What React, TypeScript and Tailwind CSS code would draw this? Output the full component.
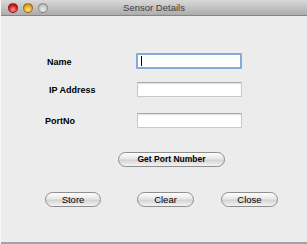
import React from "react";

const Light: React.FC<{ className: string }> = ({ className }) => (
  <span className={`block w-[10px] h-[10px] rounded-full border border-black/30 ${className}`} />
);

const Field: React.FC<{ focused?: boolean }> = ({ focused }) => (
  <div
    className={
      focused
        ? "ml-auto mr-[65px] w-[106px] h-[16px] bg-white border-2 border-[#86a9dc] rounded-[1px] flex items-center pl-[3px]"
        : "ml-auto mr-[65px] w-[105px] h-[15px] bg-white border border-[#c9c9c9] border-t-[#a9a9a9] shadow-[inset_0_1px_1px_rgba(0,0,0,0.12)]"
    }
  >
    {focused && <span className="block w-px h-[10px] bg-black" />}
  </div>
);

const Button: React.FC<{ label: string; bold?: boolean; className?: string }> = ({ label, bold, className }) => (
  <button
    className={`h-[15px] rounded-full border border-[#8e8e8e] bg-[linear-gradient(#ffffff,#e6e6e6_45%,#d4d4d4_55%,#f4f4f4)] text-black leading-none flex items-center justify-center ${
      bold ? "font-bold text-[8.5px]" : "text-[9.5px]"
    } ${className ?? ""}`}
  >
    {label}
  </button>
);

export default function App() {
  return (
    <div className="w-[307px] h-[244px] flex flex-col bg-[#ececec] font-['Liberation_Sans',Arial,sans-serif] overflow-hidden border-l border-[#f8f8f8]">
      <div className="relative h-[16px] shrink-0 flex items-center bg-[linear-gradient(#d9d9d9,#acacac)] border-b border-[#858585]">
        <div className="flex gap-[5px] pl-[7px]">
          <Light className="bg-[radial-gradient(circle_at_50%_70%,#ff9a9a,#d21c1c_60%,#9a0b0b)]" />
          <Light className="bg-[radial-gradient(circle_at_50%_70%,#ffe48a,#e3a11c_60%,#a86a06)]" />
          <Light className="bg-[radial-gradient(circle_at_50%_70%,#eeeeee,#c4c4c4_60%,#a4a4a4)] border-black/15" />
        </div>
        <span className="absolute inset-x-0 text-center text-[9.5px] text-[#3c3c3c] leading-none">Sensor Details</span>
      </div>

      <div className="flex-1 flex flex-col">
        <div className="mt-[37px] h-[16px] flex items-center">
          <span className="ml-[46px] mt-[3px] text-[9px] font-bold text-black">Name</span>
          <Field focused />
        </div>
        <div className="mt-[13px] h-[15px] flex items-center">
          <span className="ml-[48px] mt-[3px] text-[9px] font-bold text-black">IP Address</span>
          <Field />
        </div>
        <div className="mt-[16px] h-[15px] flex items-center">
          <span className="ml-[44px] mt-[3px] text-[9px] font-bold text-black">PortNo</span>
          <Field />
        </div>

        <div className="mt-[24px] flex">
          <Button label="Get Port Number" bold className="ml-[117px] w-[107px]" />
        </div>

        <div className="mt-[25px] flex">
          <Button label="Store" className="ml-[44px] w-[56px]" />
          <Button label="Clear" className="ml-[36px] w-[57px]" />
          <Button label="Close" className="ml-[27px] w-[57px]" />
        </div>

        <div className="mt-auto h-[2px] bg-[#a3a3a3]" />
      </div>
    </div>
  );
}
